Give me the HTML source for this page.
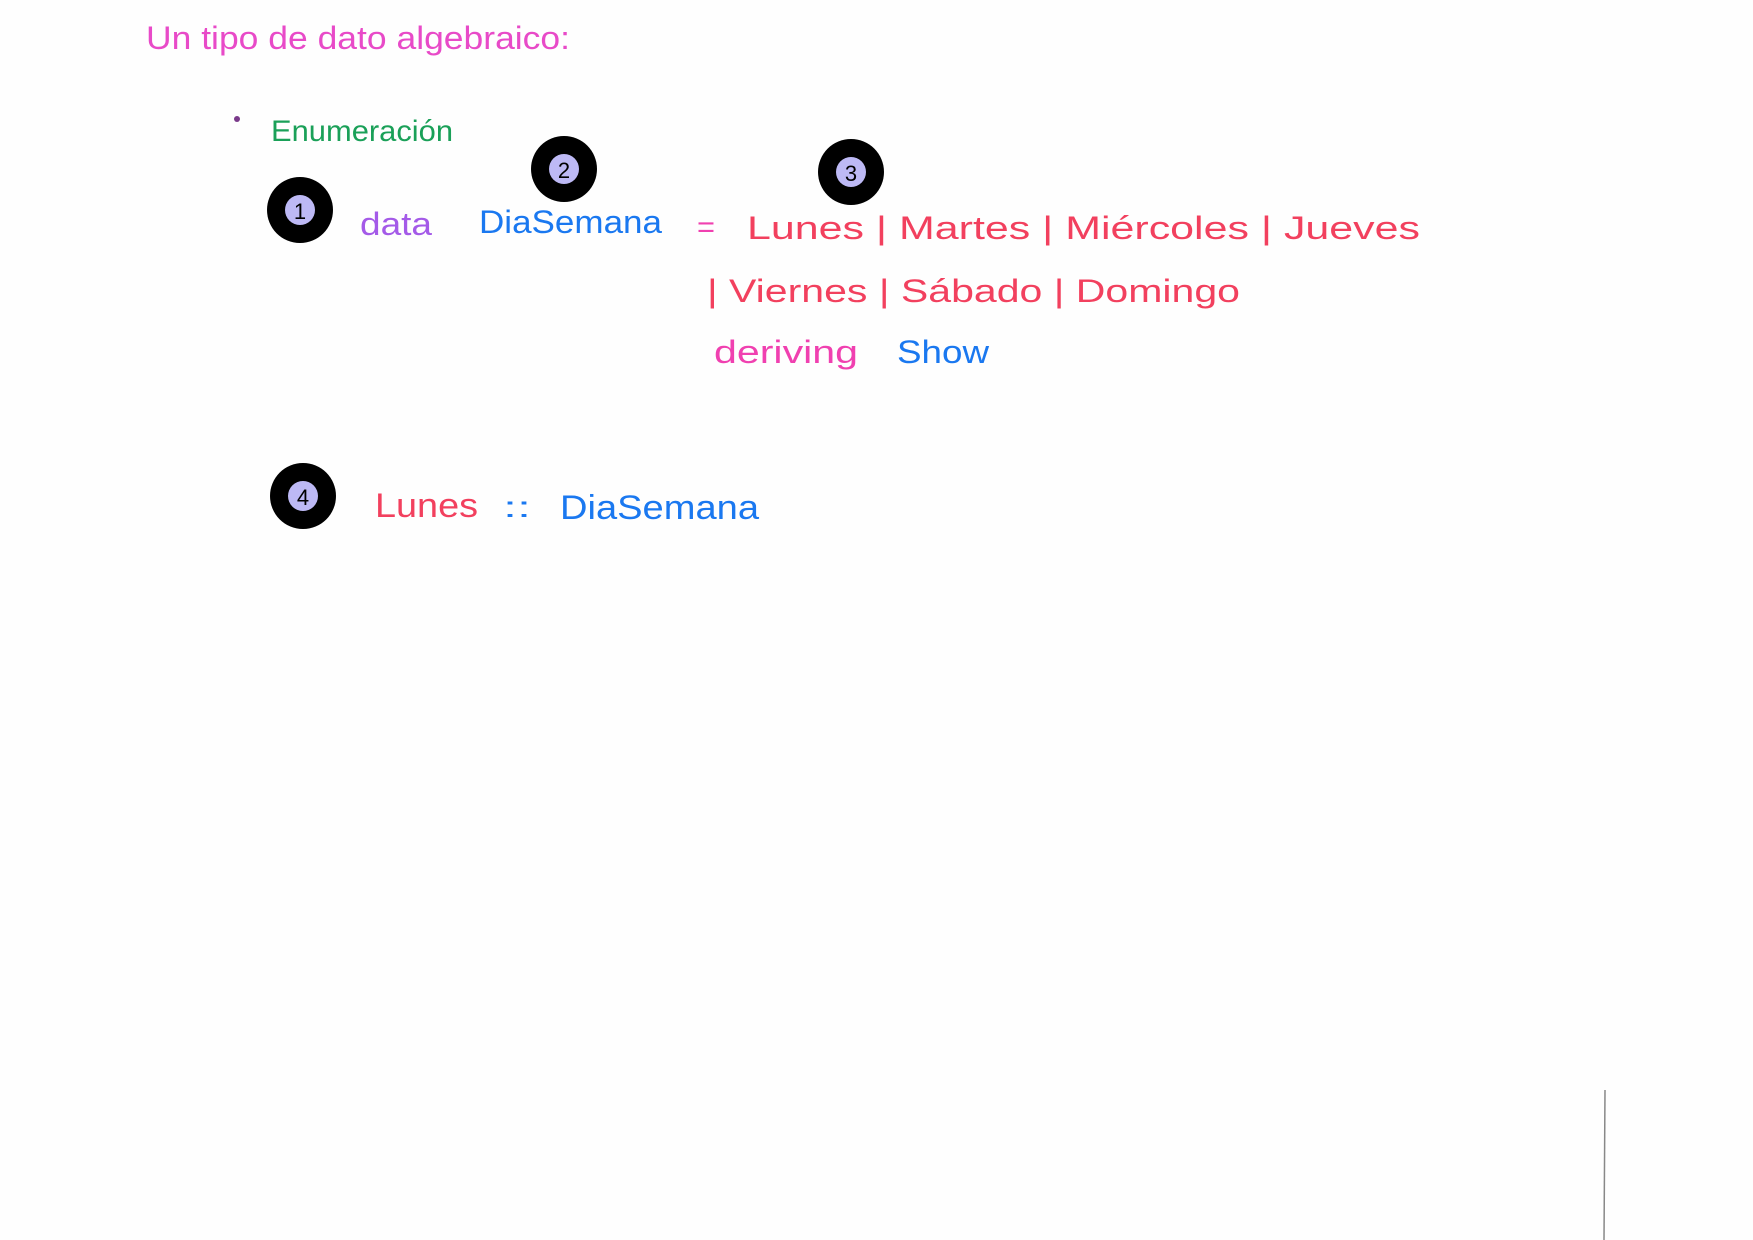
<!DOCTYPE html>
<html><head><meta charset="utf-8"><style>
html,body{margin:0;padding:0;background:#fff;}
svg{display:block;}
text{font-family:"Liberation Sans",sans-serif;}
</style></head><body>
<svg width="1753" height="1240" viewBox="0 0 1753 1240" xmlns="http://www.w3.org/2000/svg">
<rect width="1753" height="1240" fill="#fefefe"/>
<text x="146" y="49" font-size="32" fill="#e84ac8" textLength="424" lengthAdjust="spacingAndGlyphs">Un tipo de dato algebraico:</text>
<circle cx="237" cy="119" r="3" fill="#7a3a8a"/>
<text x="271" y="141" font-size="30" fill="#1aa058" textLength="182" lengthAdjust="spacingAndGlyphs">Enumeración</text>

<g>
<circle cx="300" cy="210" r="33" fill="#000"/><circle cx="300" cy="210" r="15" fill="#bdb9f5"/>
<text x="300" y="219" font-size="22" text-anchor="middle" fill="#000">1</text>
<circle cx="564" cy="169" r="33" fill="#000"/><circle cx="564" cy="169" r="15" fill="#bdb9f5"/>
<text x="564" y="178" font-size="22" text-anchor="middle" fill="#000">2</text>
<circle cx="851" cy="172" r="33" fill="#000"/><circle cx="851" cy="172" r="15" fill="#bdb9f5"/>
<text x="851" y="181" font-size="22" text-anchor="middle" fill="#000">3</text>
<circle cx="303" cy="496" r="33" fill="#000"/><circle cx="303" cy="496" r="15" fill="#bdb9f5"/>
<text x="303" y="505" font-size="22" text-anchor="middle" fill="#000">4</text>
</g>

<text x="360" y="235" font-size="32" fill="#a45ae8" textLength="72" lengthAdjust="spacingAndGlyphs">data</text>
<text x="479" y="233" font-size="32" fill="#1a78f0" textLength="183" lengthAdjust="spacingAndGlyphs">DiaSemana</text>
<text x="697" y="237" font-size="30" fill="#f040b0" textLength="18" lengthAdjust="spacingAndGlyphs">=</text>
<text x="747" y="239" font-size="32" fill="#f2405e" textLength="673" lengthAdjust="spacingAndGlyphs">Lunes | Martes | Miércoles | Jueves</text>
<text x="707" y="302" font-size="32" fill="#f2405e" textLength="533" lengthAdjust="spacingAndGlyphs">| Viernes | Sábado | Domingo</text>
<text x="714" y="363" font-size="32" fill="#f040b0" textLength="144" lengthAdjust="spacingAndGlyphs">deriving</text>
<text x="897" y="363" font-size="32" fill="#1a78f0" textLength="92" lengthAdjust="spacingAndGlyphs">Show</text>

<text x="375" y="517" font-size="34" fill="#f2405e" textLength="103" lengthAdjust="spacingAndGlyphs">Lunes</text>
<text x="503" y="517" font-size="30" fill="#1a78f0" textLength="28" lengthAdjust="spacingAndGlyphs">::</text>
<text x="560" y="519" font-size="34" fill="#1a78f0" textLength="199" lengthAdjust="spacingAndGlyphs">DiaSemana</text>

<line x1="1605" y1="1090" x2="1604" y2="1240" stroke="#888" stroke-width="1.5"/>
</svg>
</body></html>
